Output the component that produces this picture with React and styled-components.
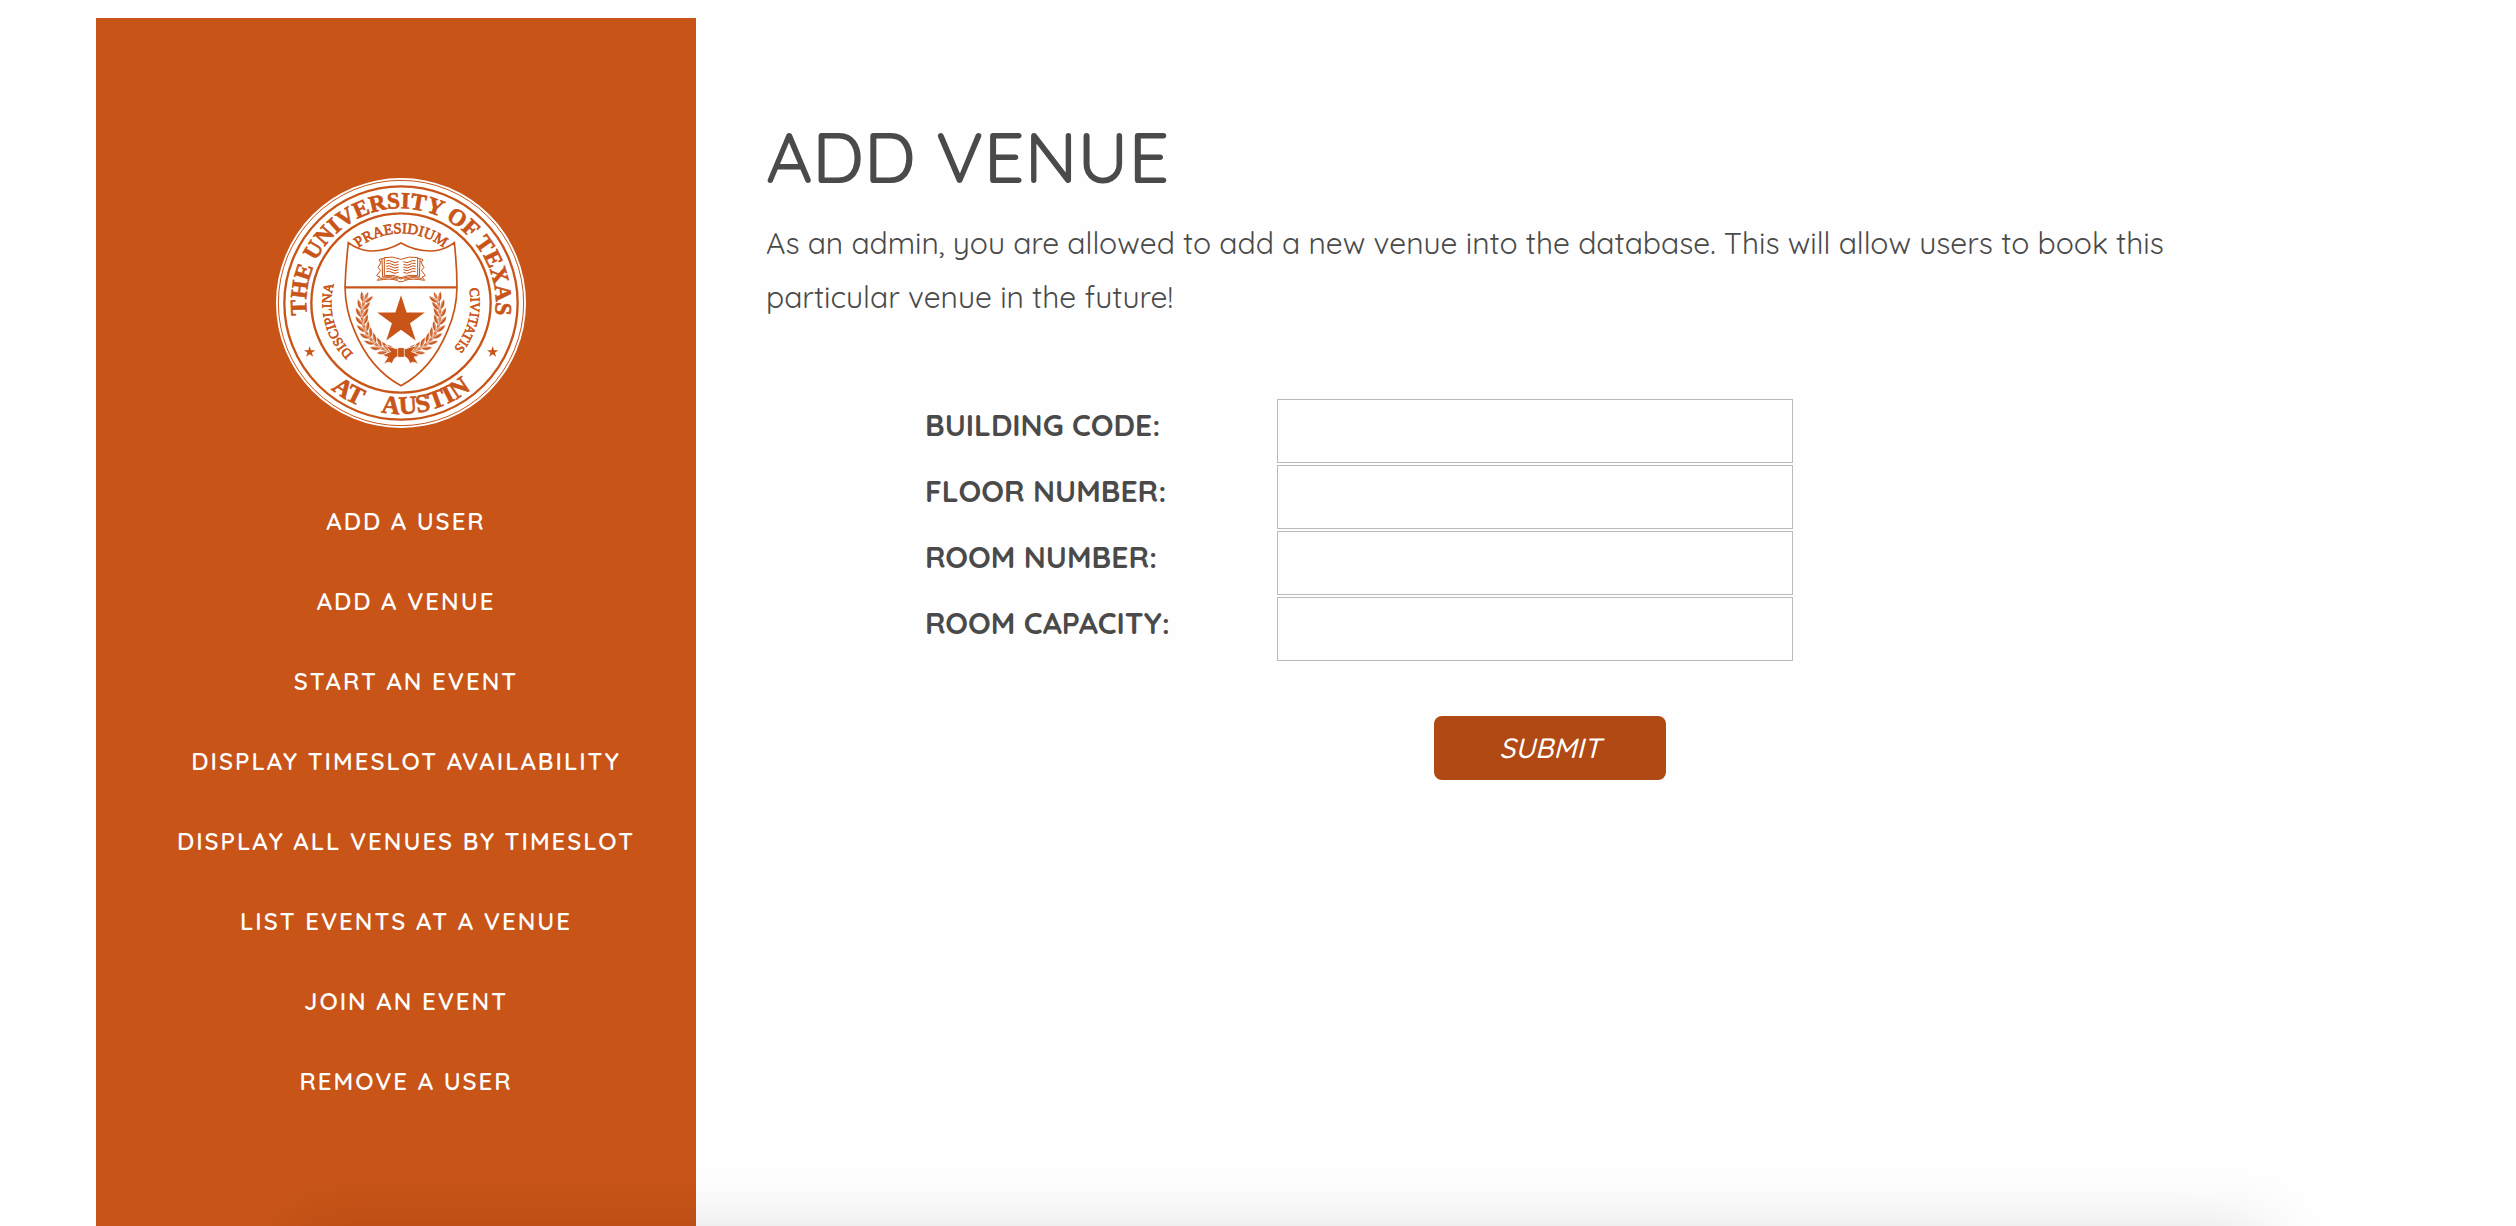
import React from "react";
import styled, { createGlobalStyle } from "styled-components";

const BRAND = "#c85418";
const INK = "#4a4a4a";

const GlobalStyle = createGlobalStyle`
  *, *::before, *::after { box-sizing: border-box; }
  body {
    margin: 0;
    background: #fefefe;
    color: ${INK};
    font-family: Quicksand, Lato, "Open Sans", sans-serif;
    font-size: 30px;
    line-height: 54px;
  }
`;

const Page = styled.div`
  display: flex;
  min-height: 100vh;
  padding: 18px 96px 0;
`;

const Sidebar = styled.aside`
  flex: 0 0 600px;
  padding: 160px 0 80px;
  background: ${BRAND};
`;

const SealFrame = styled.div`
  display: flex;
  justify-content: center;
  padding-left: 10px;
  margin-bottom: 53px;
`;

const NavList = styled.ul`
  margin: 0;
  padding: 0 0 0 20px;
  list-style: none;
  text-align: center;
`;

const NavLink = styled.a`
  display: block;
  color: #fff;
  font-size: 24px;
  font-weight: 600;
  line-height: 80px;
  letter-spacing: 2px;
  text-decoration: none;
  text-transform: uppercase;
  white-space: nowrap;
`;

const Main = styled.main`
  flex: 1;
  min-width: 0;
  padding: 98px 140px 80px 70px;
`;

const Title = styled.h1`
  margin: 0 0 20px;
  font-size: 72px;
  font-weight: 500;
  line-height: 80px;
  text-transform: uppercase;
`;

const Intro = styled.p`
  max-width: 1424px;
  margin: 0 0 75px;
`;

const Form = styled.form`
  display: grid;
  grid-template-columns: 352px minmax(0, 516px);
  row-gap: 2px;
  padding-left: 159px;
`;

const Label = styled.label`
  font-weight: 700;
  line-height: 52px;
  text-transform: uppercase;
`;

const TextBox = styled.input`
  width: 100%;
  height: 64px;
  padding: 8px 16px;
  border: 1px solid #bbb;
  border-radius: 0;
  background: #fefefe;
  color: inherit;
  font: inherit;
`;

const Submit = styled.button`
  grid-column: 2;
  justify-self: start;
  width: 232px;
  height: 64px;
  margin: 53px 0 0 157px;
  padding: 0 0 2px;
  border: 0;
  border-radius: 8px;
  background: #b04913;
  color: #fff;
  font-family: inherit;
  font-size: 28px;
  font-style: italic;
  font-weight: 500;
  text-transform: uppercase;
`;

const BottomShade = styled.div`
  position: fixed;
  inset: auto 0 0;
  height: 120px;
  overflow: hidden;
  pointer-events: none;

  &::after {
    content: "";
    position: absolute;
    top: 130px;
    left: 12%;
    right: 10%;
    height: 200px;
    box-shadow: 0 0 70px rgba(0, 0, 0, 0.15);
  }
`;

const CX = 423;
const CY = 428;

function starPoints(cx, cy, r) {
  return Array.from({ length: 10 }, (_, i) => {
    const a = -Math.PI / 2 + (i * Math.PI) / 5;
    const d = i % 2 ? r * 0.382 : r;
    return `${(cx + d * Math.cos(a)).toFixed(1)},${(cy + d * Math.sin(a)).toFixed(1)}`;
  }).join(" ");
}

const clockwise = (r) =>
  `M${CX} ${CY + r}A${r} ${r} 0 0 1 ${CX} ${CY - r}A${r} ${r} 0 0 1 ${CX} ${CY + r}`;

const LEAF_STEPS = Array.from({ length: 10 }, (_, i) => 14 + i * 11);

function Branch() {
  return (
    <g fill={BRAND} stroke="#fff" strokeWidth="1">
      {LEAF_STEPS.map((deg) => {
        const a = (deg * Math.PI) / 180;
        const x = CX - 117 * Math.sin(a);
        const y = 462 + 117 * Math.cos(a);
        return (
          <g key={deg} transform={`translate(${x} ${y}) rotate(${deg - 90})`}>
            <path d="M0 12Q-20 6 -19 -18Q-2 -6 0 12Z" />
            <path d="M0 12Q20 6 19 -18Q2 -6 0 12Z" />
            <path d="M0 4Q-9 -8 0 -24Q9 -8 0 4Z" />
            <path d="M-1 9L-12 -8M1 9L12 -8M0 0V-16" fill="none" />
          </g>
        );
      })}
    </g>
  );
}

function BookPage() {
  return (
    <g fill="none" stroke={BRAND} strokeWidth="3">
      <path d="M423 297Q398 286 373 292V346Q400 341 423 352" />
      <path d="M373 294L358 297V302L364 304L354 322L362 330L350 346L360 350L352 360Q390 353 411 360Q416 366 423 364" />
      <path d="M366 296L368 350Q400 346 423 356" />
      <path d="M360 354Q390 348 414 357" />
      {[302, 310, 318, 326, 334].map((y) => (
        <path key={y} d={`M379 ${y}Q388 ${y - 4} 396 ${y + 2}T416 ${y + 2}`} />
      ))}
    </g>
  );
}

const MIRROR = `translate(${CX * 2} 0) scale(-1 1)`;

function Seal() {
  return (
    <svg width="250" height="250" viewBox="48 53 750 750" role="img" aria-label="The University of Texas at Austin">
      <defs>
        <path id="ring-outer" d={clockwise(284)} />
        <path id="ring-inner" d={clockwise(209)} />
        <path id="ring-lower" d={`M${CX - 333} ${CY}A333 333 0 0 0 ${CX + 333} ${CY}`} />
      </defs>
      <circle cx={CX} cy={CY} r="375" fill="#fff" />
      <g fill="none" stroke={BRAND}>
        <circle cx={CX} cy={CY} r="368" strokeWidth="3" />
        <circle cx={CX} cy={CY} r="350" strokeWidth="7" />
        <circle cx={CX} cy={CY} r="269" strokeWidth="7" />
      </g>
      <g fill={BRAND} stroke={BRAND} fontFamily="'Liberation Serif', serif" textAnchor="middle">
        <g fontSize="70" fontWeight="700" strokeWidth="2">
          <text><textPath href="#ring-outer" startOffset="50%">THE UNIVERSITY OF TEXAS</textPath></text>
          <text fontSize="76"><textPath href="#ring-lower" startOffset="33%">AT</textPath></text>
          <text fontSize="76"><textPath href="#ring-lower" startOffset="58%">AUSTIN</textPath></text>
        </g>
        <g strokeWidth="2">
          <text fontSize="45"><textPath href="#ring-inner" startOffset="50%">PRAESIDIUM</textPath></text>
          <text fontSize="41"><textPath href="#ring-inner" startOffset="20.7%">DISCIPLINA</textPath></text>
          <text fontSize="41"><textPath href="#ring-inner" startOffset="79%">CIVITATIS</textPath></text>
        </g>
      </g>
      <g fill={BRAND}>
        <polygon points={starPoints(149, 575, 18)} />
        <polygon points={starPoints(698, 575, 18)} />
        <polygon points={starPoints(CX, 480, 75)} />
      </g>
      <path
        d="M265 247Q257 320 255 380Q256 450 283 510Q330 626 423 676Q516 626 563 510Q590 450 591 380Q591 320 583 247Q553 270 517 272Q466 273 423 248Q380 273 331 272Q295 270 265 247Z"
        fill="none"
        stroke={BRAND}
        strokeWidth="5"
      />
      <path d="M255 381H591" stroke={BRAND} strokeWidth="7" />
      <BookPage />
      <g transform={MIRROR}><BookPage /></g>
      <Branch />
      <g transform={MIRROR}><Branch /></g>
      <g fill={BRAND} stroke="#fff" strokeWidth="2">
        <path d="M416 567L376 556L392 574L366 584L384 590L370 612Q388 600 396 610Q400 592 416 586Z" />
        <path d="M430 567L470 556L454 574L480 584L462 590L476 612Q458 600 450 610Q446 592 430 586Z" />
        <rect x="413" y="562" width="20" height="29" rx="3" />
      </g>
    </svg>
  );
}

const LINKS = [
  "Add a user",
  "Add a venue",
  "Start an event",
  "Display timeslot availability",
  "Display all venues by timeslot",
  "List events at a venue",
  "Join an event",
  "Remove a user",
];

const FIELDS = [
  { id: "building-code", label: "Building code:" },
  { id: "floor-number", label: "Floor number:" },
  { id: "room-number", label: "Room number:" },
  { id: "room-capacity", label: "Room capacity:" },
];

export default function App() {
  return (
    <>
      <GlobalStyle />
      <Page>
        <Sidebar>
          <SealFrame>
            <Seal />
          </SealFrame>
          <nav>
            <NavList>
              {LINKS.map((text) => (
                <li key={text}>
                  <NavLink href="#">{text}</NavLink>
                </li>
              ))}
            </NavList>
          </nav>
        </Sidebar>
        <Main>
          <Title>Add venue</Title>
          <Intro>
            As an admin, you are allowed to add a new venue into the database. This will allow users to book
            this particular venue in the future!
          </Intro>
          <Form onSubmit={(e) => e.preventDefault()}>
            {FIELDS.map(({ id, label }) => (
              <React.Fragment key={id}>
                <Label htmlFor={id}>{label}</Label>
                <TextBox id={id} name={id} type="text" />
              </React.Fragment>
            ))}
            <Submit type="submit">Submit</Submit>
          </Form>
        </Main>
      </Page>
      <BottomShade />
    </>
  );
}
